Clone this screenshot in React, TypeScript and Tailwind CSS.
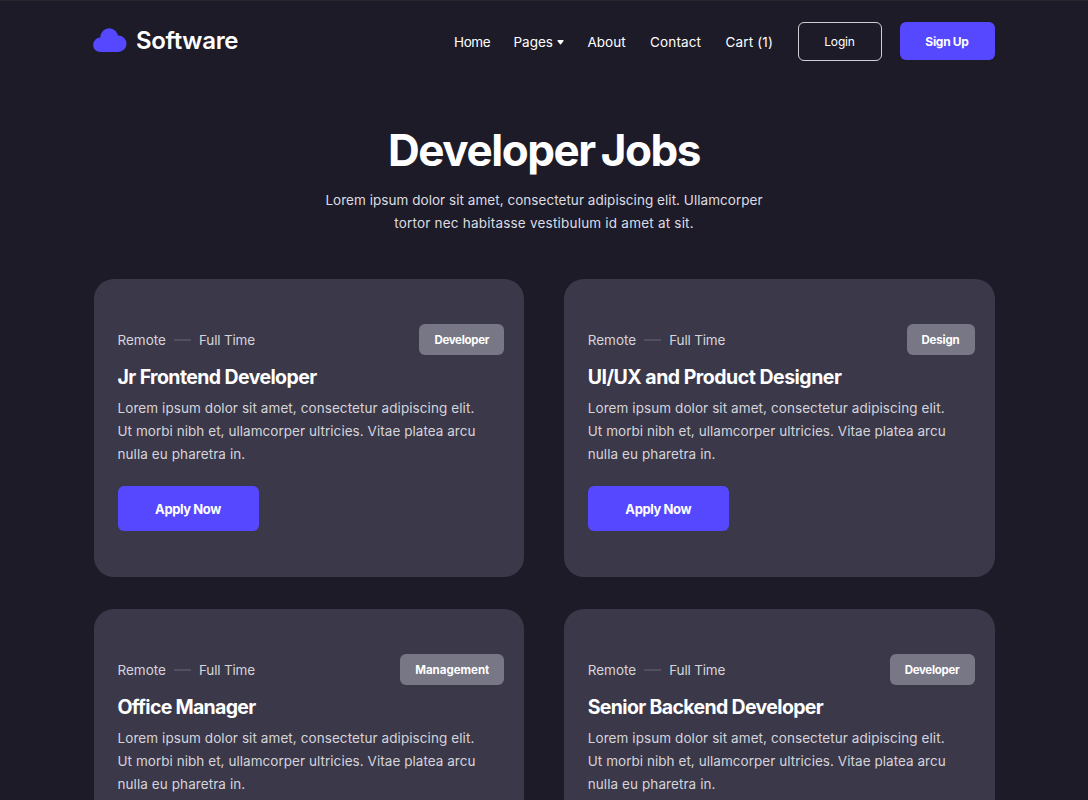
import React from "react";

type Job = { title: string; tag: string; titleClass: string; tagClass: string };

const jobs: Job[] = [
  { title: "Jr Frontend Developer", tag: "Developer", titleClass: "tracking-[-0.6px]", tagClass: "w-[85px] tracking-[-0.3px]" },
  { title: "UI/UX and Product Designer", tag: "Design", titleClass: "tracking-[-0.5px]", tagClass: "w-[68px] tracking-[-0.2px]" },
  { title: "Office Manager", tag: "Management", titleClass: "tracking-[-0.7px]", tagClass: "w-[104px]" },
  { title: "Senior Backend Developer", tag: "Developer", titleClass: "tracking-[-0.65px]", tagClass: "w-[85px] tracking-[-0.3px]" },
];

function Logo() {
  return (
    <a className="flex items-center gap-[9px]">
      <svg width="34" height="24" viewBox="0 0 34 24" fill="#5548ff" className="-mt-[3px] -ml-[0.5px] shrink-0">
        <circle cx="7.300" cy="16.800" r="7.200" />
        <circle cx="16.200" cy="9.200" r="8.900" />
        <circle cx="25.300" cy="15.800" r="8.200" />
        <rect x="7.300" y="10" width="18" height="14" />
      </svg>
      <span className="text-[24px] leading-[30px] font-semibold tracking-[-0.3px] whitespace-nowrap">Software</span>
    </a>
  );
}

function JobCard({ job }: { job: Job }) {
  return (
    <article className="h-[297.500px] rounded-[20px] bg-[#3b384a] pl-6 pr-5 pt-[45px]">
      <div className="flex h-[31px] items-center justify-between">
        <div className="flex items-center pt-[2px] text-[13.5px] text-[#d5d4db]">
          <span className="w-[49px] whitespace-nowrap">Remote</span>
          <span className="mr-2 ml-[7.500px] -mt-[2px] h-[2px] w-[17px] bg-[#514f60]" />
          <span className="tracking-[-0.18px] whitespace-nowrap">Full Time</span>
        </div>
        <span className={`flex h-[31px] items-center justify-center rounded-[6px] bg-[#777786] pt-[2px] text-[11.500px] font-bold text-white ${job.tagClass}`}>
          {job.tag}
        </span>
      </div>
      <h2 className={`mt-[9px] text-[19.500px] leading-[26px] font-bold whitespace-nowrap ${job.titleClass}`}>{job.title}</h2>
      <p className="mt-[7px] text-[13.5px] leading-[22.750px] whitespace-nowrap text-[#d5d4db]">
        <span className="tracking-[0.08px]">Lorem ipsum dolor sit amet, consectetur adipiscing elit.</span>
        <br />
        <span className="tracking-[0.045px]">Ut morbi nibh et, ullamcorper ultricies. Vitae platea arcu</span>
        <br />
        <span className="tracking-[0.08px]">nulla eu pharetra in.</span>
      </p>
      <button className="mt-[20.500px] flex h-[45.500px] w-[141px] items-center justify-center rounded-[6px] bg-[#5548ff] pt-[2px] text-[13px] font-bold tracking-[-0.4px] text-white">
        Apply Now
      </button>
    </article>
  );
}

export default function App() {
  return (
    <div className="h-[800px] overflow-hidden border-t border-[#27272e] bg-[#1d1b28] font-['Inter',sans-serif] text-white">
      <div className="mx-auto w-[901px]">
        <header className="flex h-[80px] items-center justify-between">
          <Logo />
          <nav className="flex items-center text-[13.5px] whitespace-nowrap">
            <a className="w-[59.500px] pt-[2px] tracking-[-0.4px]">Home</a>
            <a className="flex w-[74px] items-center pt-[2px]">
              <span className="w-[43.500px]">Pages</span>
              <svg width="7" height="5" viewBox="0 0 7 5" fill="white">
                <path d="M1 0h5q1 .3.500 1L4 4.300q-.5.500-1 0L.5 1Q0 .3 1 0Z" />
              </svg>
            </a>
            <a className="w-[62.500px] pt-[2px]">About</a>
            <a className="w-[75.500px] pt-[2px] tracking-[0.15px]">Contact</a>
            <a className="w-[72px] pt-[2px] tracking-[0.15px]">Cart (1)</a>
            <a className="flex h-[39px] w-[84px] items-center justify-center rounded-[6px] border border-[#d0d0d4] pt-px text-[12px] tracking-[-0.15px]">Login</a>
            <a className="ml-[18px] flex h-[38px] w-[95px] items-center justify-center rounded-[6px] bg-[#5548ff] pt-px text-[12px] font-bold tracking-[-0.3px]">Sign Up</a>
          </nav>
        </header>
        <section className="pt-[41px] text-center">
          <h1 className="text-[44px] leading-[56px] font-bold tracking-[-1.450px] [word-spacing:-3px]">Developer Jobs</h1>
          <p className="mt-[11px] text-[13.5px] leading-[22.750px] text-[#dddce2]">
            <span className="tracking-[0.04px]">Lorem ipsum dolor sit amet, consectetur adipiscing elit. Ullamcorper</span>
            <br />
            <span className="tracking-[0.21px]">tortor nec habitasse vestibulum id amet at sit.</span>
          </p>
        </section>
        <main className="mt-[44.500px] grid grid-cols-2 gap-x-[39.500px] gap-y-[32.500px]">
          {jobs.map((job) => (
            <JobCard key={job.title} job={job} />
          ))}
        </main>
      </div>
    </div>
  );
}
